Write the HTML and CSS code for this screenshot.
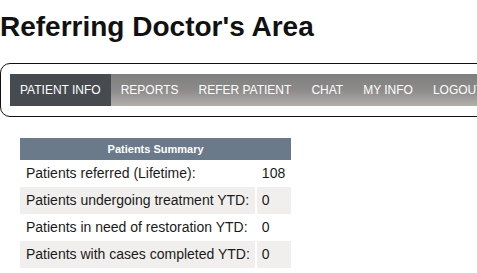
FILE: index.html
```html
<!DOCTYPE html>
<html lang="en">
<head>
    <meta charset="UTF-8">
    <meta name="viewport" content="width=device-width, initial-scale=1.0">
    <title>Referring Doctor's Area</title>
    <link rel="stylesheet" href="styles.css">
</head>
<body>
    <h1>Referring Doctor's Area</h1>

    <div class="nav-box">
        <ul class="nav">
            <li class="active"><a href="#">Patient Info</a></li>
            <li><a href="#">Reports</a></li>
            <li><a href="#">Refer Patient</a></li>
            <li><a href="#">Chat</a></li>
            <li><a href="#">My Info</a></li>
            <li><a href="#">Logout</a></li>
        </ul>
    </div>

    <table class="summary">
        <thead>
            <tr><th colspan="2">Patients Summary</th></tr>
        </thead>
        <tbody>
            <tr><td>Patients referred (Lifetime):</td><td>108</td></tr>
            <tr><td>Patients undergoing treatment YTD:</td><td>0</td></tr>
            <tr><td>Patients in need of restoration YTD:</td><td>0</td></tr>
            <tr><td>Patients with cases completed YTD:</td><td>0</td></tr>
        </tbody>
    </table>
</body>
</html>
```

FILE: styles.css
```css
body {
    margin: 0;
    padding: 0;
    font-family: "Liberation Sans", Arial, sans-serif;
    color: #111;
    background: #fff;
    overflow: hidden;
}

h1 {
    margin: 11px 0 0 0;
    font-size: 28px;
    line-height: 32px;
    font-weight: bold;
}

.nav-box {
    margin-top: 20px;
    width: 540px;
    padding: 10px 9px 10px 9px;
    border: 1px solid #111;
    border-radius: 10px;
}

.nav {
    list-style: none;
    margin: 0;
    padding: 0;
    display: flex;
    height: 32px;
    background: linear-gradient(to bottom, #7f7f7f 0%, #8c8b8a 50%, #b3afab 100%);
}

.nav li a {
    display: block;
    padding: 0 10px;
    line-height: 32px;
    font-size: 12px;
    color: #fff;
    text-decoration: none;
    text-transform: uppercase;
}

.nav li.active a {
    background: #464b4f;
}

.summary {
    margin: 21px 0 0 18px;
    border-collapse: separate;
    border-spacing: 2px 0;
    font-size: 14px;
    color: #1a1a1a;
}

.summary th {
    background: #6b7a8b;
    color: #fff;
    font-size: 11px;
    font-weight: bold;
    height: 22px;
    padding: 0;
    line-height: 14px;
}

.summary td {
    padding: 5px 5px 5px 6px;
    line-height: 17px;
}

.summary td + td {
    padding: 5px 6px 5px 5px;
    width: 22px;
}

.summary tbody tr:nth-child(even) td {
    background: #f1efed;
}
```
